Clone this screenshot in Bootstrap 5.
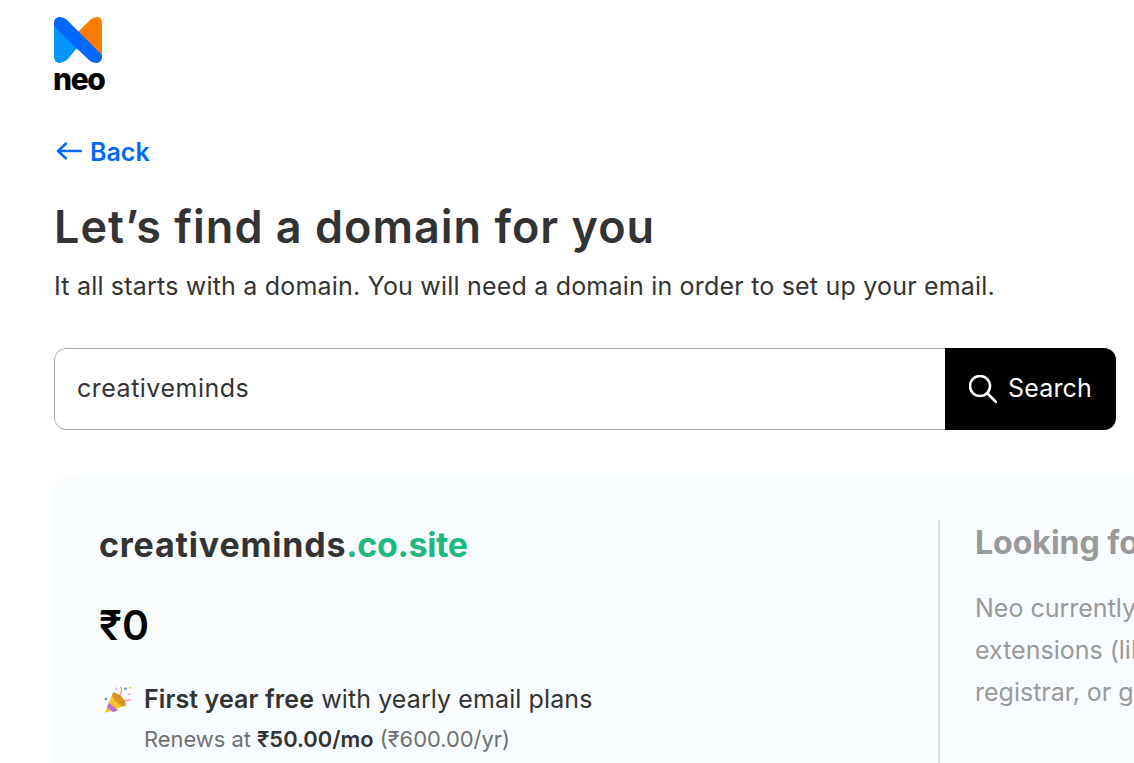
<!DOCTYPE html>
<html lang="en">
<head>
  <meta charset="UTF-8">
  <title>Neo - Find a domain</title>
  <link href="https://cdn.jsdelivr.net/npm/bootstrap@5.3.0/dist/css/bootstrap.min.css" rel="stylesheet">
  <style>
    html, body {
      height: 763px;
      overflow: hidden;
    }
    body {
      font-family: "Inter", "Noto Sans", sans-serif;
      color: #333;
      background: #fff;
    }
    .page-wrap {
      padding: 17px 18px 0 54px;
    }
    .neo-logo {
      width: 52px;
    }
    .neo-logo svg {
      display: block;
    }
    .neo-word {
      margin: 3px 0 0 -1px;
      font-size: 30px;
      font-weight: 800;
      line-height: 26px;
      color: #000;
      letter-spacing: -1.400px;
    }
    .back-link {
      margin-top: 46px;
      padding-left: 2px;
      height: 30px;
      color: #0068ff;
      font-size: 25px;
      font-weight: 600;
      text-decoration: none;
    }
    .page-title {
      margin: 31px 0 0;
      font-size: 45px;
      font-weight: 600;
      line-height: 56px;
      letter-spacing: 1px;
      color: #333;
    }
    .page-sub {
      margin: 13px 0 0;
      font-size: 25px;
      line-height: 36px;
      letter-spacing: .2px;
    }
    .domain-search {
      margin-top: 44px;
      height: 82px;
    }
    .domain-search .form-control {
      border-color: #aaa;
      border-radius: 12px 0 0 12px;
      padding: 0 22px;
      font-size: 25px;
      letter-spacing: .5px;
      color: #333;
      box-shadow: none;
    }
    .search-btn {
      width: 171px;
      gap: 11px;
      background: #000;
      color: #fff;
      border: 0;
      border-radius: 0 12px 12px 0;
      font-size: 25px;
      letter-spacing: .2px;
    }
    .search-btn:hover {
      background: #000;
      color: #fff;
    }
    .result-panel {
      margin-top: 45px;
      width: 1300px;
      height: 400px;
      background: #f8fcff;
      border-radius: 16px;
      padding: 45px;
    }
    .result-left {
      width: 841px;
      flex-shrink: 0;
      border-right: 2px solid #ddd;
    }
    .domain-name {
      margin: 0;
      font-size: 34px;
      font-weight: 700;
      line-height: 50px;
      letter-spacing: .8px;
    }
    .domain-ext {
      color: #1eb980;
      letter-spacing: -.35px;
    }
    .price {
      margin-top: 31px;
      font-size: 41px;
      font-weight: 600;
      line-height: 48px;
      color: #000;
    }
    .offer-line {
      margin: 32px 0 0 5px;
      gap: 10px;
      font-size: 25px;
      line-height: 36px;
      letter-spacing: .1px;
    }
    .renew-line {
      margin: 6px 0 0 45px;
      font-size: 21.900px;
      line-height: 32px;
      color: #707070;
    }
    .renew-line b {
      color: #333;
      font-weight: 600;
    }
    .result-right {
      padding-left: 35px;
      color: #999;
    }
    .right-title {
      margin: 0;
      font-size: 32px;
      font-weight: 700;
      line-height: 46px;
    }
    .right-copy {
      margin: 21px 0 0;
      width: 700px;
      font-size: 25px;
      line-height: 42px;
    }
  </style>
</head>
<body>
  <div class="page-wrap">
    <div class="neo-logo">
      <svg width="48" height="46" viewBox="0 0 48 46">
        <path d="M24 15 L37 2 Q40 0 44 0 Q48 1 48 6 V38 L36 30 Z" fill="#ff7c00"/>
        <path d="M0 10 L24 30 L13 43 Q9 46 5 46 Q0 45 0 40 Z" fill="#0095ff"/>
        <path d="M0 6 Q0 1 5 0 Q10 0 13 3 L48 38 V40 Q48 45 43 46 Q38 46 35 43 L0 10 Z" fill="#0068ff"/>
      </svg>
      <div class="neo-word">neo</div>
    </div>

    <a href="#" class="back-link d-flex align-items-center gap-2">
      <svg width="26" height="22" viewBox="0 0 26 22" fill="none" stroke="#0068ff" stroke-width="2.4" stroke-linecap="round" stroke-linejoin="round">
        <path d="M25 9 H2 M10 1.500 L2 9 L10 16.500"/>
      </svg>
      Back
    </a>

    <h1 class="page-title">Let’s find a domain for you</h1>
    <p class="page-sub">It all starts with a domain. You will need a domain in order to set up your email.</p>

    <div class="input-group domain-search">
      <input type="text" class="form-control" value="creativeminds">
      <button class="btn search-btn d-flex align-items-center justify-content-center" type="button">
        <svg width="28" height="28" viewBox="1 1 28 28" fill="none" stroke="#fff" stroke-width="2.6" stroke-linecap="round">
          <circle cx="12" cy="12" r="10"/>
          <path d="M19.500 19.500 L28 28"/>
        </svg>
        Search
      </button>
    </div>

    <div class="result-panel d-flex">
      <div class="result-left">
        <h2 class="domain-name">creativeminds<span class="domain-ext">.co.site</span></h2>
        <div class="price">₹0</div>
        <div class="offer-line d-flex align-items-center">
          <svg width="30" height="30" viewBox="0 0 32 32">
            <path d="M1 31 L9 10 L23 23 Z" fill="#f5c32c"/>
            <path d="M5 20 L15 28 L10 30 L3 25 Z" fill="#b46fd6"/>
            <ellipse cx="16" cy="16.500" rx="4" ry="9.500" transform="rotate(-45 16 16.500)" fill="#d99a1c"/>
            <path d="M15 15 Q20 9 18 3" fill="none" stroke="#ef5a6f" stroke-width="1"/>
            <path d="M18 20 Q24 16 29 17" fill="none" stroke="#ef5a6f" stroke-width="1"/>
            <circle cx="13" cy="5" r="1.200" fill="#f59ac0"/>
            <circle cx="23" cy="5" r="1.300" fill="#4a90e2"/>
            <circle cx="28" cy="4" r="1.200" fill="#f5c32c"/>
            <circle cx="27" cy="11" r="1.200" fill="#f59ac0"/>
            <circle cx="2" cy="16" r="1.300" fill="#4a90e2"/>
          </svg>
          <span><b class="fw-semibold">First year free</b> with yearly email plans</span>
        </div>
        <div class="renew-line">Renews at <b>₹50.00/mo</b> (₹600.00/yr)</div>
      </div>
      <div class="result-right">
        <h3 class="right-title">Looking for another domain?</h3>
        <p class="right-copy">Neo currently supports only a few domain<br>extensions (like .co.site). Buy one from a<br>registrar, or get started here.</p>
      </div>
    </div>
  </div>
  <script src="https://cdn.jsdelivr.net/npm/bootstrap@5.3.0/dist/js/bootstrap.bundle.min.js"></script>
</body>
</html>
